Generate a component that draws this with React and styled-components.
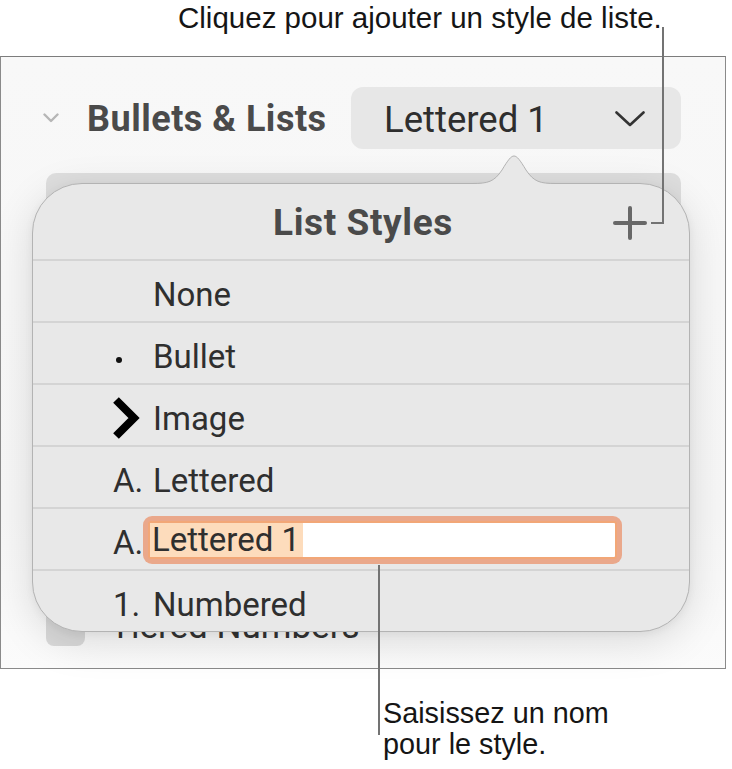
import React from "react";
import styled, { createGlobalStyle } from "styled-components";

const Global = createGlobalStyle`
  html, body { margin: 0; padding: 0; background: #ffffff; }
  body { width: 732px; height: 769px; overflow: hidden; font-family: "Liberation Sans", Arial, sans-serif; }
`;

const UI = `"Roboto", "Liberation Sans", Arial, sans-serif`;

const Page = styled.div`
  position: relative;
  width: 732px;
  height: 769px;
  overflow: hidden;
`;

const Note = styled.div`
  font-family: "Liberation Sans", Arial, sans-serif;
  font-size: ${(p) => p.$size || 29.5}px;
  line-height: 31px;
  color: #151515;
  padding-left: ${(p) => p.$indent}px;
  padding-top: ${(p) => p.$top || 0}px;
  height: ${(p) => (p.$height ? `${p.$height}px` : "auto")};
  box-sizing: border-box;
  white-space: nowrap;
`;

const Panel = styled.div`
  width: 726px;
  height: 613px;
  box-sizing: border-box;
  border: 1px solid #8a8a8a;
  border-top-color: #7c7c7c;
  background: linear-gradient(#f8f8f8, #f6f6f6 75%, #fbfbfb);
  display: flex;
  flex-direction: column;
  padding: 30px 0 22px 0;
`;

const SectionHeader = styled.div`
  display: flex;
  align-items: center;
  height: 62px;
  padding: 0 44px 0 42px;
`;

const Disclosure = styled.svg`
  width: 16px;
  height: 10px;
  margin-right: 28px;
  flex: none;
`;

const SectionTitle = styled.div`
  font-family: ${UI};
  font-weight: 700;
  font-size: 36px;
  color: #4a4a4a;
  letter-spacing: 0.5px;
  margin-top: 2px;
`;

const Dropdown = styled.div`
  margin-left: auto;
  width: 330px;
  height: 62px;
  box-sizing: border-box;
  border-radius: 12px;
  background: #e7e7e7;
  display: flex;
  align-items: center;
  justify-content: space-between;
  padding: 2px 36px 0 33px;
  font-family: ${UI};
  font-size: 36.5px;
  color: #2e2e2e;
`;

const HiddenBar = styled.div`
  margin: 24px 44px 0 45px;
  height: 50px;
  border-radius: 10px;
  background: #dedede;
`;

const CheckRow = styled.div`
  margin-top: auto;
  display: flex;
  align-items: center;
  height: 40px;
  padding-left: 45px;
`;

const CheckBox = styled.div`
  width: 39px;
  height: 40px;
  border-radius: 8px;
  background: #dadada;
`;

const CheckLabel = styled.div`
  margin-left: 25px;
  font-family: ${UI};
  font-size: 35px;
  color: #333;
`;

const Popover = styled.div`
  position: absolute;
  top: 183px;
  left: 32px;
  width: 658px;
  z-index: 2;
`;

const Arrow = styled.svg`
  position: absolute;
  top: -29px;
  left: 440px;
  width: 84px;
  height: 31px;
  z-index: 3;
`;

const Card = styled.div`
  box-sizing: border-box;
  width: 658px;
  height: 449px;
  border-radius: 50px;
  border: 1px solid #b3b3b3;
  background: #e8e8e8;
  overflow: hidden;
  box-shadow: 0 10px 40px rgba(0, 0, 0, 0.13), 0 2px 8px rgba(0, 0, 0, 0.05);
`;

const CardHeader = styled.div`
  height: 75px;
  display: grid;
  grid-template-columns: 1fr auto 1fr;
  align-items: center;
`;

const CardTitle = styled.div`
  grid-column: 2;
  font-family: ${UI};
  font-weight: 700;
  font-size: 37px;
  letter-spacing: 0.6px;
  color: #4a4a4a;
  padding-left: 4px;
  margin-top: 2px;
`;

const PlusButton = styled.svg`
  grid-column: 3;
  justify-self: end;
  width: 34px;
  height: 34px;
  margin-right: 42px;
  margin-top: 2px;
`;

const Row = styled.div`
  height: 60px;
  box-sizing: border-box;
  border-top: 2px solid #d4d4d4;
  display: flex;
  align-items: center;
  padding: 6px 0 0 80px;
  height: 62px;
  font-family: ${UI};
  font-size: 33px;
  color: #2f2f2f;
`;

const Marker = styled.div`
  width: 40px;
  flex: none;
  display: flex;
  align-items: center;
`;

const Dot = styled.span`
  width: 6px;
  height: 6px;
  border-radius: 50%;
  background: #111;
  margin-left: 3px;
  margin-top: 8px;
`;

const Label = styled.div``;

const FieldRing = styled.div`
  margin-left: -10px;
  margin-top: -4px;
  width: 479px;
  height: 48px;
  box-sizing: border-box;
  border-radius: 9px;
  background: #eaa88b;
  padding: 5px;
  display: flex;
`;

const Field = styled.div`
  flex: 1;
  box-sizing: border-box;
  border: 2px solid #f2a777;
  border-radius: 3px;
  background: #ffffff;
  display: flex;
  align-items: stretch;
`;

const Selected = styled.span`
  background: #fddcbc;
  line-height: 34px;
  padding: 0 3px 0 2px;
  color: #2f2f2f;
`;

const Leader = styled.div`
  position: absolute;
  left: ${(p) => p.$x}px;
  top: ${(p) => p.$y}px;
  width: ${(p) => p.$w}px;
  height: ${(p) => p.$h}px;
  background: #737373;
  z-index: 5;
`;

const Chevron = () => (
  <svg width="30" height="16" viewBox="0 0 30 16">
    <polyline points="1.5,1.5 15,14 28.5,1.5" fill="none" stroke="#333" strokeWidth="2.6" strokeLinecap="round" strokeLinejoin="round" />
  </svg>
);

const ImageMarker = () => (
  <svg width="30" height="42" viewBox="0 0 30 42">
    <polyline points="3,3 21,21 3,39" fill="none" stroke="#000" strokeWidth="8" strokeLinecap="butt" strokeLinejoin="miter" />
  </svg>
);

const rows = [
  { marker: null, label: "None" },
  { marker: "dot", label: "Bullet" },
  { marker: "image", label: "Image" },
  { marker: "A.", label: "Lettered" },
  { marker: "A.", label: "Lettered 1", editing: true },
  { marker: "1.", label: "Numbered" },
];

export default function App() {
  return (
    <Page>
      <Global />
      <Note $indent={178} $top={2} $height={56}>Cliquez pour ajouter un style de liste.</Note>
      <Panel>
        <SectionHeader>
          <Disclosure viewBox="0 0 16 10">
            <polyline points="1.5,1.5 8,8 14.5,1.5" fill="none" stroke="#b6b6b6" strokeWidth="2.4" strokeLinecap="round" strokeLinejoin="round" />
          </Disclosure>
          <SectionTitle>Bullets &amp; Lists</SectionTitle>
          <Dropdown>
            <span>Lettered 1</span>
            <Chevron />
          </Dropdown>
        </SectionHeader>
        <HiddenBar />
        <CheckRow>
          <CheckBox />
          <CheckLabel>Tiered Numbers</CheckLabel>
        </CheckRow>
      </Panel>
      <Note $indent={383} $top={29} $size={28.8}>
        Saisissez un nom
        <br />
        pour le style.
      </Note>

      <Popover>
        <Arrow viewBox="0 0 84 31">
          <path d="M0,31 L0,29.5 C16,29.5 22,28 30,16 C36,6 39,2 42,2 C45,2 48,6 54,16 C62,28 68,29.5 84,29.5 L84,31 Z" fill="#e8e8e8" />
          <path d="M0,29.5 C16,29.5 22,28 30,16 C36,6 39,2 42,2 C45,2 48,6 54,16 C62,28 68,29.5 84,29.5" fill="none" stroke="#b3b3b3" strokeWidth="1" />
        </Arrow>
        <Card>
          <CardHeader>
            <CardTitle>List Styles</CardTitle>
            <PlusButton viewBox="0 0 34 34">
              <line x1="17" y1="2" x2="17" y2="32" stroke="#686868" strokeWidth="4" strokeLinecap="round" />
              <line x1="2" y1="17" x2="32" y2="17" stroke="#686868" strokeWidth="4" strokeLinecap="round" />
            </PlusButton>
          </CardHeader>
          {rows.map((r) => (
            <Row key={r.label}>
              <Marker>
                {r.marker === "dot" && <Dot />}
                {r.marker === "image" && <ImageMarker />}
                {r.marker && r.marker !== "dot" && r.marker !== "image" && r.marker}
              </Marker>
              {r.editing ? (
                <FieldRing>
                  <Field>
                    <Selected>{r.label}</Selected>
                  </Field>
                </FieldRing>
              ) : (
                <Label>{r.label}</Label>
              )}
            </Row>
          ))}
        </Card>
      </Popover>

      <Leader $x={662} $y={27} $w={2} $h={197} />
      <Leader $x={651} $y={222} $w={13} $h={2} />
      <Leader $x={378} $y={565} $w={2} $h={170} />
    </Page>
  );
}
